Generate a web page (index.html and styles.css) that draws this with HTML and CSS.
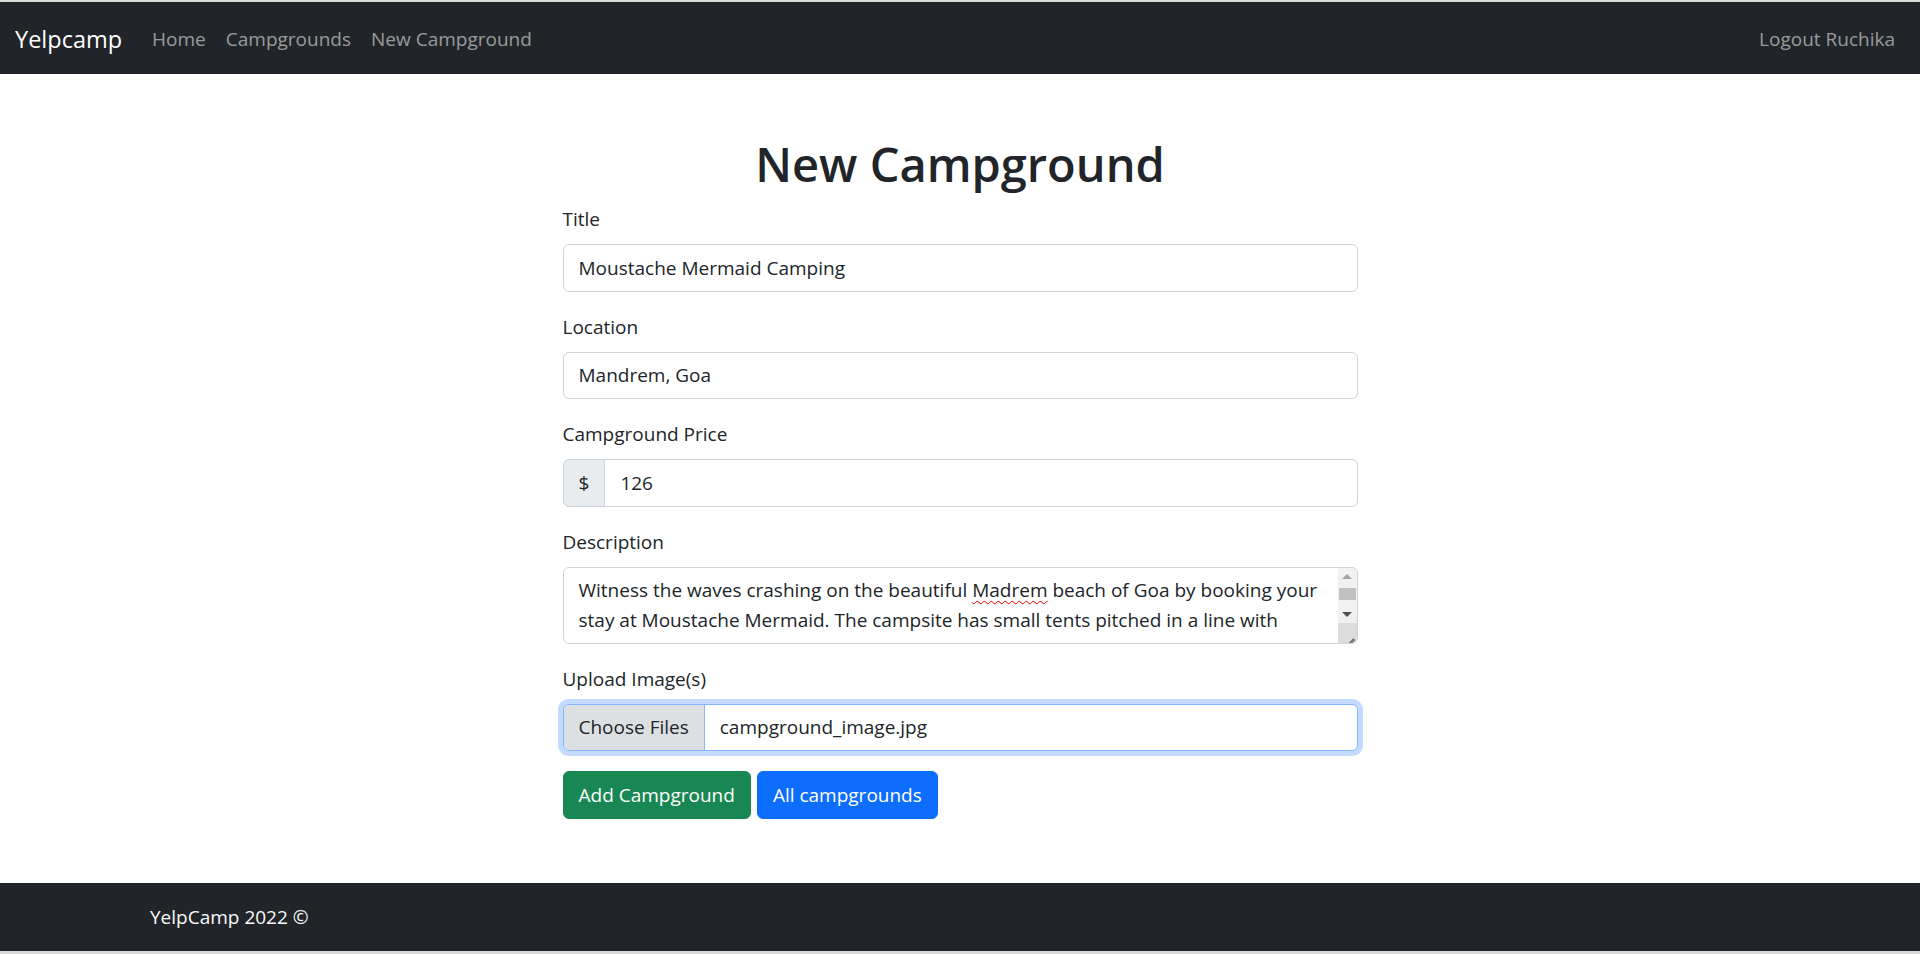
FILE: index.html
```html
<!DOCTYPE html>
<html lang="en">
<head>
<meta charset="utf-8">
<title>New Campground</title>
<link rel="stylesheet" href="styles.css">
</head>
<body>
<nav class="navbar">
  <a class="brand" href="#">Yelpcamp</a>
  <div class="nav-links">
    <a class="nav-link" href="#">Home</a>
    <a class="nav-link" href="#">Campgrounds</a>
    <a class="nav-link" href="#">New Campground</a>
  </div>
  <div class="nav-right">
    <a class="nav-link" href="#">Logout Ruchika</a>
  </div>
</nav>

<main class="main">
  <h1 class="page-title">New Campground</h1>
  <form class="form-col">
    <div class="field">
      <label class="label">Title</label>
      <div class="control">Moustache Mermaid Camping</div>
    </div>
    <div class="field">
      <label class="label">Location</label>
      <div class="control">Mandrem, Goa</div>
    </div>
    <div class="field">
      <label class="label">Campground Price</label>
      <div class="input-group">
        <span class="addon">$</span>
        <div class="control grouped">126</div>
      </div>
    </div>
    <div class="field">
      <label class="label">Description</label>
      <div class="control textarea">
        <div class="ta-text">Witness the waves crashing on the beautiful <span class="misspelled">Madrem</span> beach of Goa by booking your<br>stay at Moustache Mermaid. The campsite has small tents pitched in a line with</div>
        <div class="scrollbar">
          <div class="sb-btn sb-up"></div>
          <div class="sb-track"><div class="sb-thumb"></div></div>
          <div class="sb-btn sb-down"></div>
          <div class="sb-resizer"></div>
        </div>
      </div>
    </div>
    <div class="field">
      <label class="label">Upload Image(s)</label>
      <div class="file-input">
        <span class="file-btn">Choose Files</span>
        <span class="file-name">campground_image.jpg</span>
      </div>
    </div>
    <div class="actions">
      <button type="button" class="btn btn-success">Add Campground</button>
      <a class="btn btn-primary" href="#">All campgrounds</a>
    </div>
  </form>
</main>

<footer class="footer">
  <div class="footer-inner">YelpCamp 2022 &copy;</div>
</footer>
</body>
</html>
```

FILE: styles.css
```css
* { box-sizing: border-box; }

html {
  background: #dadada;
}

body {
  margin: 2px 0 3px;
  min-height: calc(100vh - 5px);
  display: flex;
  flex-direction: column;
  background: #fff;
  font-family: "Open Sans", "Noto Sans", sans-serif;
  font-size: 19px;
  line-height: 30px;
  color: #212529;
}

a { text-decoration: none; }

/* Navbar */
.navbar {
  display: flex;
  align-items: center;
  height: 72px;
  padding: 12px 15px 10px;
  background: #212529;
}
.brand {
  font-size: 23.5px;
  line-height: 37px;
  padding: 6px 0;
  margin-right: 20px;
  color: #fff;
}
.nav-links { display: flex; }
.nav-right { margin-left: auto; display: flex; }
.nav-link {
  padding: 10px 10px;
  color: rgba(255, 255, 255, 0.55);
}

/* Main */
.main {
  margin-top: 60px;
}
.page-title {
  margin: 0 0 10px;
  text-align: center;
  font-size: 47px;
  line-height: 60px;
  font-weight: 600;
  color: #212529;
}
.form-col {
  width: 795px;
  margin: 0 auto;
}
.field { margin-bottom: 20px; }
.label {
  display: block;
  margin-bottom: 10px;
}
.control {
  display: block;
  width: 100%;
  height: 47.5px;
  padding: 7.5px 15px;
  border: 1px solid #ced4da;
  border-radius: 6px;
  background: #fff;
  color: #212529;
  white-space: nowrap;
  overflow: hidden;
}

.input-group { display: flex; }
.addon {
  display: flex;
  align-items: center;
  padding: 7.5px 15px;
  height: 47.5px;
  background: #e9ecef;
  border: 1px solid #ced4da;
  border-radius: 6px 0 0 6px;
  color: #212529;
}
.control.grouped {
  flex: 1;
  margin-left: -1px;
  border-radius: 0 6px 6px 0;
}

.control.textarea {
  position: relative;
  height: 77px;
  padding-right: 34px;
}
.misspelled {
  text-decoration: underline wavy #e00;
  text-decoration-thickness: 1px;
  text-underline-offset: 3px;
}
.scrollbar {
  position: absolute;
  top: 0;
  right: 0;
  bottom: 0;
  width: 19px;
  display: flex;
  flex-direction: column;
  background: #f1f1f1;
}
.sb-btn {
  height: 17px;
  display: flex;
  align-items: center;
  justify-content: center;
}
.sb-up::before {
  content: "";
  border-left: 5px solid transparent;
  border-right: 5px solid transparent;
  border-bottom: 5px solid #a3a3a3;
}
.sb-down::before {
  content: "";
  border-left: 5px solid transparent;
  border-right: 5px solid transparent;
  border-top: 5px solid #505050;
}
.sb-track {
  flex: 1;
  padding: 3px 1px 0;
}
.sb-thumb {
  height: 12px;
  background: #c1c1c1;
}
.sb-resizer {
  position: relative;
  height: 20px;
  background: #dcdcdc;
}
.sb-resizer::before,
.sb-resizer::after {
  content: "";
  position: absolute;
  height: 1.3px;
  background: #555;
  transform: rotate(-45deg);
  transform-origin: right center;
}
.sb-resizer::before {
  right: 3px;
  bottom: 3px;
  width: 11px;
}
.sb-resizer::after {
  right: 2px;
  bottom: 2px;
  width: 6px;
}

.file-input {
  display: flex;
  align-items: stretch;
  height: 47.5px;
  border: 1px solid #86b7fe;
  border-radius: 6px;
  box-shadow: 0 0 0 5px rgba(13, 110, 253, 0.25);
  overflow: hidden;
  background: #fff;
}
.file-btn {
  display: flex;
  align-items: center;
  padding: 0 15px;
  background: #dde0e3;
  border-right: 1px solid #86b7fe;
  color: #212529;
}
.file-name {
  display: flex;
  align-items: center;
  padding-left: 15px;
  color: #212529;
}

.actions {
  display: flex;
  gap: 6px;
}
.btn {
  display: inline-block;
  height: 47.5px;
  padding: 7.5px 15px;
  border: 1px solid transparent;
  border-radius: 6px;
  font-family: inherit;
  font-size: 19px;
  line-height: 30px;
  color: #fff;
  cursor: pointer;
}
.btn-success { background: #198754; border-color: #198754; }
.btn-primary { background: #0d6efd; border-color: #0d6efd; }

/* Footer */
.footer {
  margin-top: auto;
  background: #212529;
  padding: 19px 0;
}
.footer-inner {
  max-width: 1650px;
  margin: 0 auto;
  padding: 0 15px;
  color: #f8f9fa;
}
```
